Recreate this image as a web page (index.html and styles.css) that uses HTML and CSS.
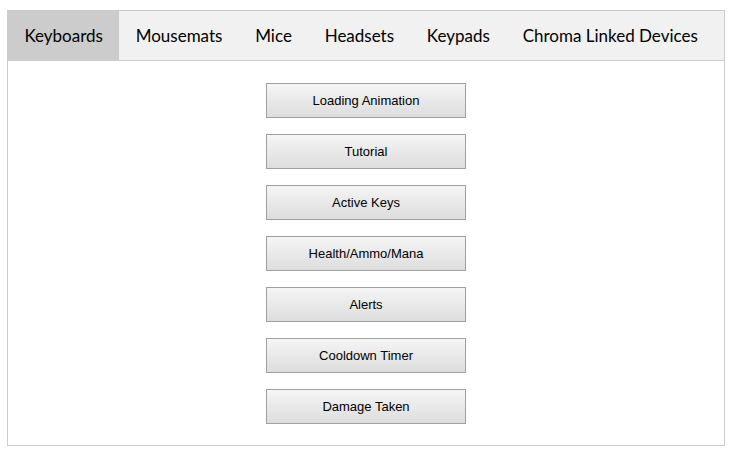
FILE: index.html
```html
<!DOCTYPE html>
<html>
<head>
<meta charset="utf-8">
<link rel="stylesheet" href="styles.css">
</head>
<body>
<div class="panel">
  <div class="tabs">
    <div class="tab active">Keyboards</div>
    <div class="tab">Mousemats</div>
    <div class="tab">Mice</div>
    <div class="tab">Headsets</div>
    <div class="tab">Keypads</div>
    <div class="tab">Chroma Linked Devices</div>
  </div>
  <div class="content">
    <button class="btn">Loading Animation</button>
    <button class="btn">Tutorial</button>
    <button class="btn">Active Keys</button>
    <button class="btn">Health/Ammo/Mana</button>
    <button class="btn">Alerts</button>
    <button class="btn">Cooldown Timer</button>
    <button class="btn">Damage Taken</button>
  </div>
</div>
</body>
</html>
```

FILE: styles.css
```css
html, body {
  margin: 0;
  padding: 0;
  background: #fff;
}
.panel {
  margin: 10px 0 0 7px;
  width: 716px;
  border: 1px solid #ccc;
}
.tabs {
  display: flex;
  height: 49px;
  background: #f1f1f1;
  border-bottom: 1px solid #ccc;
}
.tab {
  display: flex;
  align-items: center;
  padding: 0 16.4px;
  font-family: Lato, "Liberation Sans", sans-serif;
  font-size: 17px;
  color: #000;
}
.tab.active {
  background: #ccc;
}
.content {
  display: flex;
  flex-direction: column;
  align-items: center;
  gap: 16px;
  padding: 22px 0 21px;
}
.btn {
  width: 200px;
  height: 35px;
  margin: 0;
  padding: 0;
  border: 1px solid #a0a0a0;
  background: linear-gradient(to bottom, #f5f5f5, #dddddd);
  font-family: "Liberation Sans", Arial, sans-serif;
  font-size: 13px;
  color: #000;
}
```
